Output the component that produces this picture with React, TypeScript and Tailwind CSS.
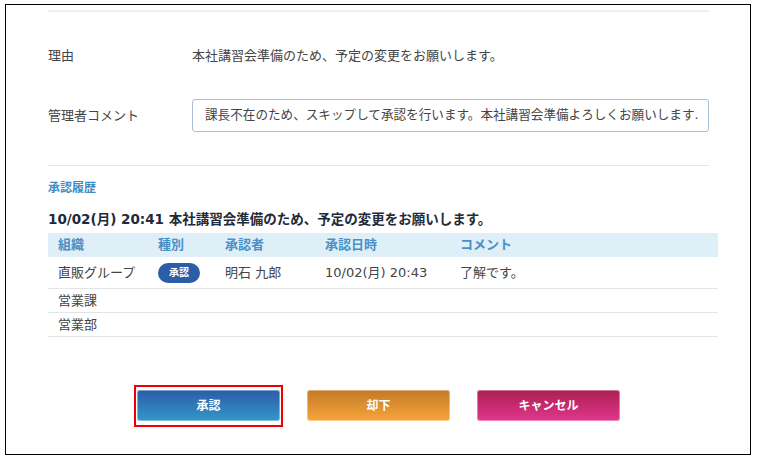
import type { ReactNode } from "react";

const font = { fontFamily: '"DejaVu Sans", "Noto Sans CJK JP", sans-serif' };

type Row = {
  org: string;
  kind?: string;
  approver?: string;
  at?: string;
  comment?: string;
};

const history: Row[] = [
  { org: "直販グループ", kind: "承認", approver: "明石 九郎", at: "10/02(月) 20:43", comment: "了解です。" },
  { org: "営業課" },
  { org: "営業部" },
];

const cols = "grid grid-cols-[100px_67px_100px_135px_1fr] pl-[10px] items-center";

function Field({ label, children }: { label: string; children: ReactNode }) {
  return (
    <div className="flex items-center">
      <div className="w-[144px] shrink-0 text-[13px] text-[#444]">{label}</div>
      <div className="flex-1 min-w-0">{children}</div>
    </div>
  );
}

function ActionButton({ label, tone }: { label: string; tone: "blue" | "orange" | "pink" }) {
  const tones = {
    blue: "bg-gradient-to-b from-[#2b5ca8] to-[#3597c9]",
    orange: "bg-gradient-to-b from-[#c27a26] to-[#f7a63a]",
    pink: "bg-gradient-to-b from-[#ad1f50] to-[#e0368f]",
  };
  return (
    <button
      className={`${tones[tone]} block w-[143px] h-[31px] rounded-[3px] text-white text-[12px] font-bold shadow-[0_0_0_1px_rgba(255,255,255,0.4)_inset]`}
    >
      {label}
    </button>
  );
}

export default function App() {
  return (
    <div className="w-[757px] h-[460px] bg-white pt-[4px] pl-[5px]" style={font}>
      <div className="w-[746px] h-[451px] border border-black pl-[42px] pt-[5px]">
        <div className="w-[661px] h-[2px] bg-[#eef0f2]" />

        <div className="w-[661px] mt-[34px] leading-[18px]">
          <Field label="理由">
            <span className="text-[13px] text-[#444]">本社講習会準備のため、予定の変更をお願いします。</span>
          </Field>
        </div>

        <div className="w-[661px] mt-[34px]">
          <Field label="管理者コメント">
            <div className="h-[33px] border border-[#a8c0d8] rounded-[3px] flex items-center pl-[12px] pr-[1px] overflow-hidden whitespace-nowrap text-[12.6px] text-[#444]">
              課長不在のため、スキップして承認を行います。本社講習会準備よろしくお願いします.
            </div>
          </Field>
        </div>

        <div className="w-[661px] h-px bg-[#e3e7ea] mt-[33px]" />

        <div className="mt-[14px] text-[12px] leading-[16px] font-bold text-[#3b8dc4]">承認履歴</div>

        <div className="mt-[14px] text-[13.5px] leading-[18px] font-bold text-[#1f2a3a]">
          10/02(月) 20:41 本社講習会準備のため、予定の変更をお願いします。
        </div>

        <div className="w-[670px] mt-[5px] text-[13px]">
          <div className={`${cols} h-[24px] bg-[#dfeff8] text-[#4a8fc6] font-bold`}>
            <div>組織</div>
            <div>種別</div>
            <div>承認者</div>
            <div>承認日時</div>
            <div>コメント</div>
          </div>
          {history.map((r, i) => (
            <div
              key={r.org}
              className={`${cols} ${i === 0 ? "h-[32px]" : "h-[24px]"} border-b border-[#e1e5e8] text-[#444]`}
            >
              <div>{r.org}</div>
              <div>
                {r.kind && (
                  <span className="inline-flex items-center justify-center w-[42px] h-[20px] rounded-full bg-[#2c5da8] text-white text-[10px] font-bold">
                    {r.kind}
                  </span>
                )}
              </div>
              <div>{r.approver}</div>
              <div>{r.at}</div>
              <div>{r.comment}</div>
            </div>
          ))}
        </div>

        <div className="w-[661px] mt-[53px] flex justify-center items-start gap-[27px]">
          <div className="px-[1px] pt-[3px] pb-[4px] border-2 border-[#ee0000] -mx-[3px] -mt-[5px]">
            <ActionButton label="承認" tone="blue" />
          </div>
          <ActionButton label="却下" tone="orange" />
          <ActionButton label="キャンセル" tone="pink" />
        </div>
      </div>
    </div>
  );
}
